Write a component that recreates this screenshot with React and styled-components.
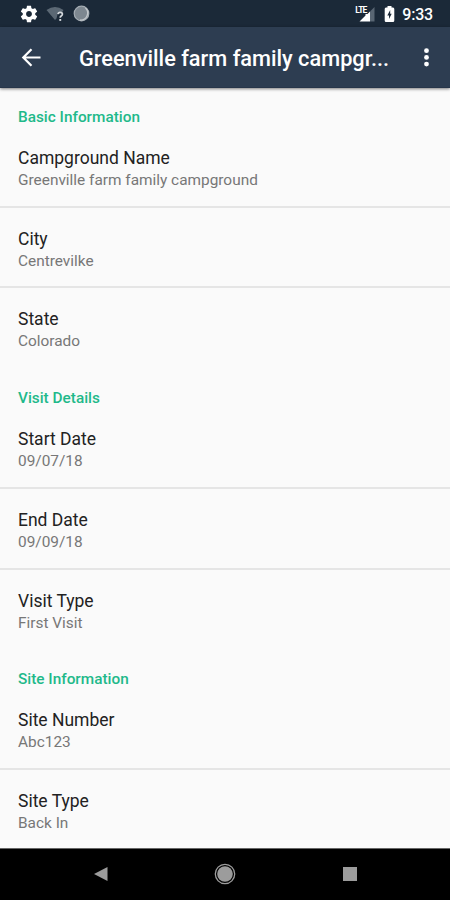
import React from 'react';
import styled, { createGlobalStyle } from 'styled-components';

const GlobalStyle = createGlobalStyle`
  * {
    box-sizing: border-box;
  }

  body {
    margin: 0;
    background: #fafafa;
    font-family: Roboto, 'Liberation Sans', sans-serif;
    overflow: hidden;
  }
`;

const Screen = styled.div`
  display: flex;
  flex-direction: column;
  width: 450px;
  height: 900px;
  overflow: hidden;
  background: #fafafa;
`;

const StatusBar = styled.div`
  display: flex;
  flex: none;
  align-items: center;
  justify-content: space-between;
  height: 27px;
  padding: 0 17px 0 19px;
  background: #1b2938;
`;

const StatusIcons = styled.div`
  display: flex;
  align-items: center;
`;

const Clock = styled.span`
  margin-left: 7px;
  padding-top: 2px;
  color: #fff;
  font-size: 16px;
  font-weight: 500;
  line-height: 25px;
  letter-spacing: -0.2px;
`;

const Toolbar = styled.header`
  display: flex;
  flex: none;
  align-items: center;
  height: 61px;
  padding: 0 16px 0 21px;
  background: #2d3d51;
  border-bottom: 1px solid #27364a;
  box-shadow: 0 1px 3px rgba(0, 0, 0, 0.5);
  z-index: 1;
`;

const IconButton = styled.button`
  display: flex;
  flex: none;
  padding: 0;
  border: 0;
  background: none;
`;

const Title = styled.h1`
  flex: 1;
  margin: 0 0 0 37px;
  padding-top: 3px;
  color: #fff;
  font-size: 21.75px;
  font-weight: 500;
  line-height: 30px;
  white-space: nowrap;
`;

const Content = styled.main`
  flex: 1;
  min-height: 0;
  overflow: hidden;
`;

const SectionTitle = styled.h2`
  height: 39.3px;
  margin: 0;
  padding: 20px 18px 0;
  color: #1fb98a;
  font-size: 15.35px;
  font-weight: 500;
  line-height: 19px;
`;

const Row = styled.div`
  height: 80.6px;
  padding: 20px 18px 0;
  border-bottom: 2px solid ${({ $last }) => ($last ? 'transparent' : '#e5e5e5')};
`;

const Label = styled.div`
  color: #222;
  font-size: 17.5px;
  line-height: 22px;
`;

const Value = styled.div`
  color: #777;
  font-size: 15.4px;
  line-height: 22px;
`;

const NavBar = styled.nav`
  display: flex;
  flex: none;
  align-items: center;
  justify-content: space-between;
  height: 52px;
  padding: 0 92px 2px;
  background: #000;
  border-top: 1px solid #666;
`;

const sections = [
  {
    title: 'Basic Information',
    rows: [
      ['Campground Name', 'Greenville farm family campground'],
      ['City', 'Centrevilke'],
      ['State', 'Colorado'],
    ],
  },
  {
    title: 'Visit Details',
    rows: [
      ['Start Date', '09/07/18'],
      ['End Date', '09/09/18'],
      ['Visit Type', 'First Visit'],
    ],
  },
  {
    title: 'Site Information',
    rows: [
      ['Site Number', 'Abc123'],
      ['Site Type', 'Back In'],
    ],
  },
];

const GearIcon = () => (
  <svg width="20" height="20" viewBox="0 0 24 24" fill="#fff">
    <path d="M19.43 12.98c.04-.32.07-.64.07-.98s-.03-.66-.07-.98l2.11-1.65c.19-.15.24-.42.12-.64l-2-3.46c-.12-.22-.39-.3-.61-.22l-2.49 1c-.52-.4-1.08-.73-1.69-.98l-.38-2.65C14.46 2.18 14.25 2 14 2h-4c-.25 0-.46.18-.49.42l-.38 2.65c-.61.25-1.17.59-1.69.98l-2.49-1c-.23-.09-.49 0-.61.22l-2 3.46c-.13.22-.07.49.12.64l2.11 1.65c-.04.32-.07.65-.07.98s.03.66.07.98l-2.11 1.65c-.19.15-.24.42-.12.64l2 3.46c.12.22.39.3.61.22l2.49-1c.52.4 1.08.73 1.69.98l.38 2.65c.03.24.24.42.49.42h4c.25 0 .46-.18.49-.42l.38-2.65c.61-.25 1.17-.59 1.69-.98l2.49 1c.23.09.49 0 .61-.22l2-3.46c.12-.22.07-.49-.12-.64l-2.11-1.65zM12 15.500c-1.930 0-3.500-1.570-3.500-3.500s1.570-3.500 3.500-3.500 3.500 1.570 3.500 3.500-1.570 3.500-3.500 3.500z" />
  </svg>
);

const WifiIcon = () => (
  <svg width="20" height="18" viewBox="0 0 20 18" style={{ marginLeft: 7 }}>
    <path d="M0.500 5Q9 -1 17.500 5L16 7.500H12L10.500 13.500L9 15Z" fill="#5b6874" />
    <path
      d="M12 9.200Q12.200 7.400 14.200 7.400Q16.400 7.400 16.400 9.200Q16.400 10.200 15.200 11Q14.200 11.700 14.200 12.800"
      fill="none"
      stroke="#d5d9dd"
      strokeWidth="1.700"
    />
    <rect x="13.300" y="14" width="1.900" height="1.900" fill="#d5d9dd" />
  </svg>
);

const SyncIcon = () => (
  <svg width="17" height="17" viewBox="0 0 17 17" style={{ marginLeft: 7 }}>
    <circle cx="8.500" cy="8.500" r="7.300" fill="#7d8790" stroke="#a4acb3" strokeWidth="1.200" />
    <path d="M12.500 3A7 7 0 0 1 7 15" fill="none" stroke="#c3c8cc" strokeWidth="1.300" />
  </svg>
);

const Signal = styled.div`
  position: relative;
  width: 21px;
  height: 18px;
`;

const Network = styled.span`
  position: absolute;
  top: 1px;
  left: 0;
  color: #fff;
  font-size: 8.5px;
  font-weight: 700;
  line-height: 8px;
  letter-spacing: -0.8px;
`;

const SignalIcon = () => (
  <svg width="21" height="18" viewBox="0 0 21 18">
    <path d="M19.500 2V16.500H15V6.500Z" fill="#596673" />
    <path d="M4.500 16.500L10.500 10.500V9H12.500L15 6.500V16.500Z" fill="#fff" />
  </svg>
);

const BatteryIcon = () => (
  <svg width="11" height="18" viewBox="0 0 11 18" style={{ marginLeft: 8 }}>
    <path d="M3.500 1H7.500V2.500H9Q10.300 2.500 10.300 4V15.500Q10.300 17 9 17H2Q.700 17 .700 15.500V4Q.700 2.500 2 2.500H3.500Z" fill="#fff" />
    <path d="M6.200 5L3.300 10.500H5V14L7.700 8.800H6.200Z" fill="#1b2938" />
  </svg>
);

const BackIcon = () => (
  <svg width="21" height="20" viewBox="0 0 21 20" fill="none" stroke="#fff" strokeWidth="2.200">
    <path d="M19.500 10.500H2.500M10.500 2.200L2.300 10.500L10.500 18.800" />
  </svg>
);

const MoreIcon = () => (
  <svg width="15" height="22" viewBox="0 0 15 22" fill="#fff">
    <circle cx="7.500" cy="4.700" r="2.400" />
    <circle cx="7.500" cy="11.400" r="2.400" />
    <circle cx="7.500" cy="18.100" r="2.400" />
  </svg>
);

const App = () => (
  <>
    <GlobalStyle />
    <Screen>
      <StatusBar>
        <StatusIcons>
          <GearIcon />
          <WifiIcon />
          <SyncIcon />
        </StatusIcons>
        <StatusIcons>
          <Signal>
            <SignalIcon />
            <Network>LTE</Network>
          </Signal>
          <BatteryIcon />
          <Clock>9:33</Clock>
        </StatusIcons>
      </StatusBar>
      <Toolbar>
        <IconButton aria-label="Back">
          <BackIcon />
        </IconButton>
        <Title>Greenville farm family campgr...</Title>
        <IconButton aria-label="More">
          <MoreIcon />
        </IconButton>
      </Toolbar>
      <Content>
        {sections.map(({ title, rows }) => (
          <section key={title}>
            <SectionTitle>{title}</SectionTitle>
            {rows.map(([label, value], i) => (
              <Row key={label} $last={i === 2}>
                <Label>{label}</Label>
                <Value>{value}</Value>
              </Row>
            ))}
          </section>
        ))}
      </Content>
      <NavBar>
        <svg width="16" height="16" viewBox="0 0 16 16">
          <path d="M2 8L15.500 1V15Z" fill="#9c9c9c" />
        </svg>
        <svg width="22" height="22" viewBox="0 0 22 22">
          <circle cx="11" cy="11" r="9.700" fill="none" stroke="#9c9c9c" strokeWidth="1.300" />
          <circle cx="11" cy="11" r="7.800" fill="#9c9c9c" />
        </svg>
        <svg width="16" height="16" viewBox="0 0 16 16">
          <rect x="1" y="1" width="14" height="14" fill="#9c9c9c" />
        </svg>
      </NavBar>
    </Screen>
  </>
);

export default App;
